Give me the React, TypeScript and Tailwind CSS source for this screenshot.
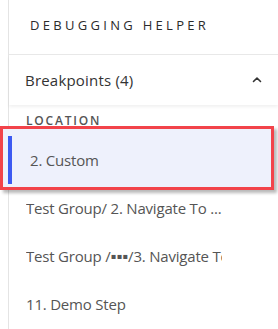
import React from "react";

type StepProps = {
  label: React.ReactNode;
  selected?: boolean;
};

const StepRow = ({ label, selected }: StepProps) => {
  if (selected) {
    return (
      <div className="relative h-[48px]">
        {/* annotation box drawn over the row */}
        <div className="absolute -left-[9px] -top-[10px] right-[4px] -bottom-[6px] border-[3px] border-[#f2434a] bg-[#eef1fc] shadow-[3px_3px_3px_rgba(0,0,0,0.28)]" />
        <div className="absolute -left-[1px] top-0 h-full w-[4px] bg-[#3d5af1]" />
        <div className="relative z-10 flex h-full items-center pl-[21px] text-[15px] tracking-[-0.2px] text-[#555]">
          {label}
        </div>
      </div>
    );
  }
  return (
    <div className="flex h-[48px] items-center pl-[17px] text-[15px] tracking-[-0.2px] text-[#555]">
      <div className="w-[196px] overflow-hidden whitespace-nowrap">{label}</div>
    </div>
  );
};

export default function App() {
  return (
    <div className="flex h-[329px] w-[278px] overflow-hidden bg-white font-['Open_Sans','Lato',sans-serif]">
      <div className="w-2 shrink-0" />
      <div className="flex min-w-0 flex-1 flex-col border-l border-[#e4e4e4]">
        <div className="flex h-[55px] shrink-0 items-center border-b border-[#e8e8e8] pb-[3px] pl-[21px] text-[13px] font-medium tracking-[3.3px] text-[#2b2b2b]">
          DEBUGGING HELPER
        </div>
        <div className="flex h-[50px] shrink-0 items-center justify-between pl-[16px] pr-[15px] shadow-[0_2px_3px_rgba(0,0,0,0.06)]">
          <span className="text-[15px] tracking-[0.2px] text-[#333]">Breakpoints (4)</span>
          <svg width="12" height="12" viewBox="0 0 12 12" fill="none" stroke="#333" strokeWidth="1.6" strokeLinecap="round" strokeLinejoin="round">
            <polyline points="2.5,7.5 6,4 9.5,7.5" />
          </svg>
        </div>
        <div className="h-[31px] shrink-0 pl-[17px] pt-[8px] text-[12px] font-semibold leading-4 tracking-[1.8px] text-[#555]">
          LOCATION
        </div>
        <StepRow label="2. Custom" selected />
        <StepRow label="Test Group/ 2. Navigate To ..." />
        <StepRow label="Test Group /▪▪▪/3. Navigate To Page" />
        <StepRow label="11. Demo Step" />
      </div>
    </div>
  );
}
